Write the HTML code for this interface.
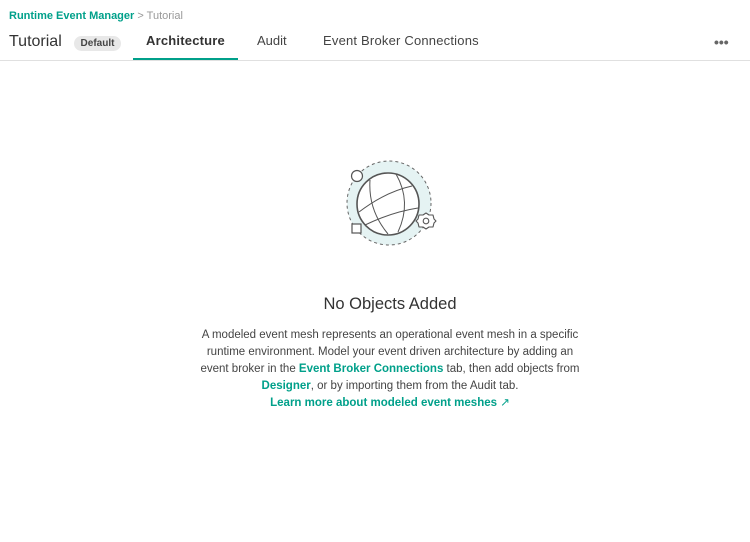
<!DOCTYPE html>
<html><head><style>
body{margin:0;width:750px;height:542px;background:#fff;font-family:"Liberation Sans",sans-serif;color:#333;position:relative;overflow:hidden}
.a{position:absolute;white-space:nowrap}
.t{color:#00a08a;font-weight:bold}
</style></head><body>
<div class="a" style="left:9px;top:10px;font-size:11px"><span class="t">Runtime Event Manager</span> <span style="color:#999">&gt; Tutorial</span></div>
<div class="a" style="left:9px;top:33px;font-size:16px;color:#333">Tutorial</div>
<div class="a" style="left:74px;top:36px;width:47px;height:15px;border-radius:8px;background:#e8e8e8;font-size:10px;line-height:15px;text-align:center;font-weight:bold;color:#444">Default</div>
<div class="a" style="left:146px;top:33px;font-size:13px;font-weight:bold;color:#333;letter-spacing:0.2px">Architecture</div>
<div class="a" style="left:133px;top:58px;width:105px;height:3px;background:#00a08a"></div>
<div class="a" style="left:257px;top:33px;font-size:13px;color:#444">Audit</div>
<div class="a" style="left:323px;top:33px;font-size:13px;color:#444;letter-spacing:0.2px">Event Broker Connections</div>
<div class="a" style="left:714px;top:34px;font-size:14px;font-weight:bold;color:#666">•••</div>
<div class="a" style="left:0;top:60px;width:750px;height:1px;background:#e0e0e0"></div>
<svg class="a" style="left:330px;top:150px" width="110" height="100" viewBox="0 0 110 100">
<circle cx="59" cy="53" r="42" fill="#e5f3f3" stroke="#666" stroke-dasharray="3 3" stroke-width="1"/>
<circle cx="58" cy="54" r="31" fill="#fff" stroke="#555" stroke-width="1.6"/>
<g fill="none" stroke="#555" stroke-width="1">
<path d="M29 62 Q55 42 82 36"/><path d="M35 75 Q62 62 88 58"/>
<path d="M40 30 Q38 60 58 84"/><path d="M66 24 Q82 52 68 82"/>
</g>
<circle cx="27" cy="26" r="5.5" fill="#fff" stroke="#555" stroke-width="1.2"/>
<rect x="22" y="74" width="9" height="9" fill="#fff" stroke="#555" stroke-width="1.2"/>
<path d="M96 63 L99 65 L103 65 L104 69 L106 71 L104 73 L103 77 L99 77 L96 79 L93 77 L89 77 L88 73 L86 71 L88 69 L89 65 L93 65 Z" fill="#fff" stroke="#555" stroke-width="1.1" stroke-linejoin="round"/>
<circle cx="96" cy="71" r="2.8" fill="#fff" stroke="#555" stroke-width="1.1"/>
</svg>
<div class="a" style="left:0;width:780px;top:295px;text-align:center;font-size:16.5px;color:#333">No Objects Added</div>
<div class="a" style="left:0;width:780px;top:327px;text-align:center;font-size:11.5px;line-height:17px;color:#444;white-space:normal">
A modeled event mesh represents an operational event mesh in a specific<br>runtime environment. Model your event driven architecture by adding an<br>event broker in the <span class="t">Event Broker Connections</span> tab, then add objects from<br><span class="t">Designer</span>, or by importing them from the Audit tab.<br><span class="t">Learn more about modeled event meshes</span> <span style="color:#00a08a">&#x2197;</span></div>
</body></html>
